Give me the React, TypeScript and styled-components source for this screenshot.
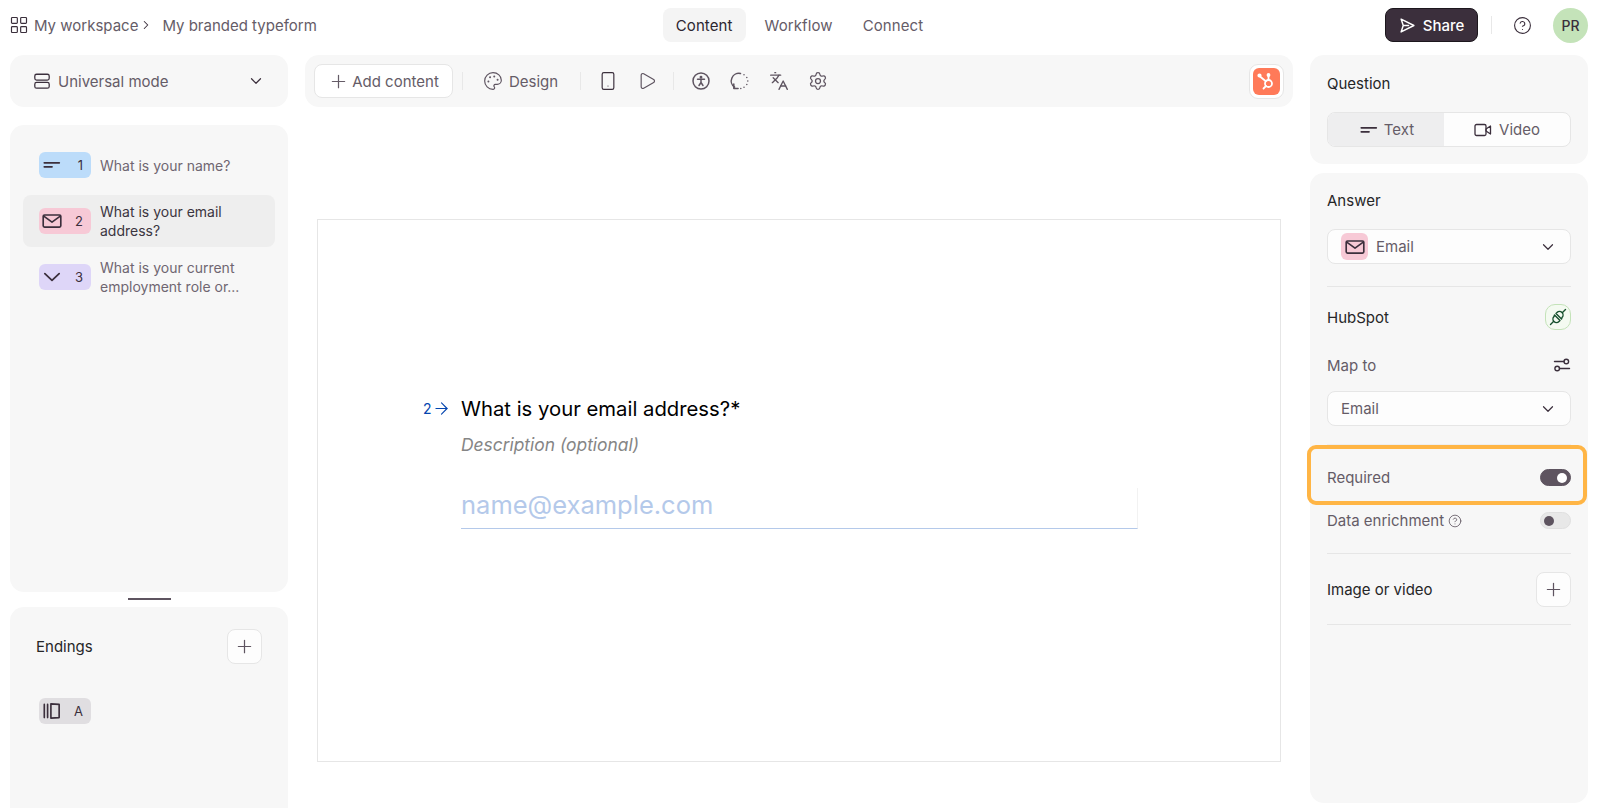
import { ReactNode } from "react";
import styled, { createGlobalStyle } from "styled-components";
import {
  ArrowRight,
  ChevronDown,
  ChevronRight,
  CircleHelp,
  Languages,
  LayoutGrid,
  Palette,
  Play,
  Plus,
  Settings,
  Smartphone,
} from "lucide-react";

const GlobalStyle = createGlobalStyle`
  html, body {
    margin: 0;
    padding: 0;
    height: 808px;
    overflow: hidden;
    background: #ffffff;
    font-family: Inter, "Liberation Sans", sans-serif;
    color: #5e5460;
  }
  * { box-sizing: border-box; }
`;

const Page = styled.div`
  width: 1600px;
  height: 808px;
  overflow: hidden;
`;

const TopBar = styled.header`
  height: 55px;
  display: grid;
  grid-template-columns: 1fr auto 1fr;
  align-items: center;
  padding: 0 12px 5px 9px;
`;

const Breadcrumb = styled.div`
  display: flex;
  align-items: center;
  font-size: 15px;
  color: #655c67;
`;

const CrumbLink = styled.span`
  margin: 0 1px 0 5px;
`;

const CrumbTitle = styled.span`
  margin-left: 9px;
`;

const Tabs = styled.nav`
  display: flex;
  margin-left: 6px;
`;

const Tab = styled.div<{ $active?: boolean }>`
  height: 34px;
  padding: 0 13px;
  margin-right: ${({ $active }) => ($active ? "6px" : "4px")};
  display: flex;
  align-items: center;
  border-radius: 8px;
  font-size: 15px;
  letter-spacing: 0.1px;
  color: ${({ $active }) => ($active ? "#2c2630" : "#655c67")};
  background: ${({ $active }) => ($active ? "#f4f4f4" : "transparent")};
`;

const TopActions = styled.div`
  display: flex;
  align-items: center;
  justify-content: flex-end;
`;

const ShareButton = styled.button`
  width: 93px;
  height: 34px;
  display: flex;
  align-items: center;
  justify-content: center;
  gap: 7px;
  border: 1px solid #1c171d;
  border-radius: 8px;
  background: #3b2f3c;
  color: #ffffff;
  font: 500 15px Inter, sans-serif;
`;

const VerticalRule = styled.div<{ $left?: number; $right?: number }>`
  width: 1px;
  height: 18px;
  margin: 0 ${({ $right }) => $right ?? 0}px 0 ${({ $left }) => $left ?? 0}px;
  background: #e8e8e8;
`;

const HelpSlot = styled.div`
  display: flex;
  margin: 0 21px;
`;

const Avatar = styled.div`
  width: 35px;
  height: 35px;
  border-radius: 50%;
  background: #c4e3b9;
  color: #3b2f3c;
  display: flex;
  align-items: center;
  justify-content: center;
  font-size: 14px;
  font-weight: 500;
`;

const Workspace = styled.div`
  display: grid;
  grid-template-columns: 278px 988px 278px;
  column-gap: 17px;
  padding-left: 10px;
`;

const Column = styled.div`
  display: flex;
  flex-direction: column;
`;

const Card = styled.section`
  background: #f7f7f7;
  border-radius: 14px;
`;

const ModeCard = styled(Card)`
  height: 52px;
  display: flex;
  align-items: center;
  padding: 0 23px 0 23px;
  font-size: 15px;
  color: #655c67;
  margin-bottom: 18px;
`;

const ModeLabel = styled.span`
  margin-left: 7px;
  flex: 1;
`;

const ListCard = styled(Card)`
  height: 467px;
  padding: 14px 13px;
`;

const QuestionItem = styled.div<{ $active?: boolean }>`
  display: flex;
  align-items: center;
  height: 52px;
  padding: 0 16px;
  border-radius: 8px;
  background: ${({ $active }) => ($active ? "#eeeeee" : "transparent")};
  margin-bottom: 4px;
`;

const TypeChip = styled.div<{ $color: string }>`
  flex: none;
  width: 52px;
  height: 26px;
  border-radius: 6px;
  background: ${({ $color }) => $color};
  display: flex;
  align-items: center;
  justify-content: space-between;
  padding: 0 8px 0 2px;
  font-size: 13px;
  color: #3b2f3c;
  margin-right: 9px;
`;

const ItemText = styled.div<{ $active?: boolean }>`
  font-size: 14px;
  line-height: 19px;
  color: ${({ $active }) => ($active ? "#3b3540" : "#6f6671")};
`;

const DragHandle = styled.div`
  width: 43px;
  height: 2px;
  margin: 6px auto 7px;
  background: #5e5460;
`;

const EndingsCard = styled(Card)`
  height: 260px;
  padding: 22px 26px 0 26px;
`;

const EndingsHead = styled.div`
  display: flex;
  align-items: center;
  justify-content: space-between;
  margin-bottom: 34px;
`;

const CardTitle = styled.div`
  font-size: 15px;
  color: #262627;
`;

const EndingChip = styled(TypeChip)`
  margin-left: 3px;
`;

const SquareButton = styled.button`
  width: 35px;
  height: 35px;
  padding: 0;
  border-radius: 8px;
  border: 1px solid #e6e6e6;
  background: #fdfdfd;
  display: flex;
  align-items: center;
  justify-content: center;
  color: #5e5460;
`;

const Toolbar = styled(Card)`
  height: 52px;
  display: flex;
  align-items: center;
  padding: 0 9px 0 9px;
`;

const AddButton = styled.button`
  width: 139px;
  height: 34px;
  display: flex;
  align-items: center;
  justify-content: center;
  gap: 3px;
  padding: 0;
  border-radius: 8px;
  border: 1px solid #e6e6e6;
  background: #ffffff;
  font: 15px Inter, sans-serif;
  color: #655c67;
`;

const ToolGroup = styled.div`
  display: flex;
  align-items: center;
  gap: 19px;
`;

const DesignLabel = styled.div`
  display: flex;
  align-items: center;
  gap: 6px;
  font-size: 15px;
  color: #655c67;
`;

const HubspotFrame = styled.div`
  margin-left: auto;
  width: 35px;
  height: 35px;
  border-radius: 9px;
  background: #ffffff;
  border: 1px solid #e6e6e6;
  display: flex;
  align-items: center;
  justify-content: center;
`;

const HubspotBadge = styled.div`
  width: 27px;
  height: 27px;
  border-radius: 6px;
  background: #ff7a59;
  display: flex;
  align-items: center;
  justify-content: center;
`;

const Canvas = styled.div`
  margin: 112px 12px 0;
  height: 543px;
  border: 1px solid #e6e6e6;
  padding: 174px 0 0 105px;
  background: #ffffff;
`;

const PromptRow = styled.div`
  display: flex;
  align-items: center;
  height: 28px;
`;

const PromptIndex = styled.div`
  width: 38px;
  display: flex;
  align-items: center;
  font-size: 14px;
  color: #0445af;
  gap: 0;
`;

const PromptTitle = styled.div`
  font-size: 20.3px;
  color: #000000;
`;

const Description = styled.div`
  margin: 11px 0 0 38px;
  font-size: 17.4px;
  line-height: 24px;
  font-style: italic;
  color: #858585;
`;

const AnswerField = styled.div`
  margin: 31px 0 0 38px;
  width: 677px;
  height: 41px;
  display: flex;
  align-items: center;
  padding-bottom: 8px;
  border-bottom: 1px solid #b4c9ea;
  border-right: 1px solid #f2f2f2;
  font-size: 25.5px;
  color: #b4c9ea;
`;

const QuestionCard = styled(Card)`
  height: 109px;
  padding: 19px 17px 0 17px;
  margin-bottom: 9px;
`;

const Segmented = styled.div`
  margin-top: 19px;
  height: 35px;
  display: grid;
  grid-template-columns: 116px 1fr;
  border: 1px solid #e6e6e6;
  border-radius: 8px;
  overflow: hidden;
  background: #fdfdfd;
`;

const Segment = styled.div<{ $active?: boolean }>`
  display: flex;
  align-items: center;
  justify-content: center;
  gap: ${({ $active }) => ($active ? "4px" : "7px")};
  font-size: 15px;
  color: #655c67;
  background: ${({ $active }) => ($active ? "#eeeeef" : "transparent")};
`;

const AnswerCard = styled(Card)`
  height: 630px;
  padding: 18px 17px 0 17px;
`;

const SelectBox = styled.div<{ $top?: number }>`
  margin-top: ${({ $top }) => $top ?? 0}px;
  height: 35px;
  display: flex;
  align-items: center;
  justify-content: space-between;
  padding: 0 13px 0 13px;
  border: 1px solid #e6e6e6;
  border-radius: 8px;
  background: #fdfdfd;
  font-size: 15px;
  color: #655c67;
`;

const SelectValue = styled.div`
  display: flex;
  align-items: center;
  gap: 8px;
`;

const MiniChip = styled.div`
  width: 27px;
  height: 27px;
  border-radius: 6px;
  background: #f7c9d6;
  display: flex;
  align-items: center;
  justify-content: center;
`;

const Rule = styled.div<{ $top: number; $faint?: boolean }>`
  margin-top: ${({ $top }) => $top}px;
  height: 1px;
  background: ${({ $faint }) => ($faint ? "#eeeeee" : "#e6e6e6")};
`;

const SettingRow = styled.div<{ $top: number; $height: number }>`
  position: relative;
  display: flex;
  align-items: center;
  justify-content: space-between;
  margin-top: ${({ $top }) => $top}px;
  height: ${({ $height }) => $height}px;
`;

const SettingLabel = styled.div`
  display: flex;
  align-items: center;
  gap: 4px;
  font-size: 15px;
  color: #655c67;
`;

const Highlight = styled.div`
  position: absolute;
  left: -20px;
  right: -16px;
  top: -23px;
  bottom: -19px;
  border: 4px solid #ffb545;
  border-radius: 9px;
`;

const Toggle = styled.div<{ $on?: boolean }>`
  width: 31px;
  height: 17px;
  border-radius: 9px;
  padding: 3px;
  display: flex;
  justify-content: ${({ $on }) => ($on ? "flex-end" : "flex-start")};
  background: ${({ $on }) => ($on ? "#5e5460" : "#e8e8e8")};
  border: 1px solid ${({ $on }) => ($on ? "#5e5460" : "#e0e0e0")};
`;

const ToggleKnob = styled.div<{ $on?: boolean }>`
  width: 10px;
  height: 10px;
  border-radius: 50%;
  background: ${({ $on }) => ($on ? "#ffffff" : "#5e5460")};
`;

const ConnectedBadge = styled.div`
  width: 26px;
  height: 26px;
  border-radius: 10px;
  border: 1px solid #c4e3b9;
  background: #f4faf1;
  display: flex;
  align-items: center;
  justify-content: center;
`;

const Icon = ({ size = 20, color = "#3b2f3c", width = 1.5, children }: { size?: number; color?: string; width?: number; children: ReactNode }) => (
  <svg width={size} height={size} viewBox="0 0 20 20" fill="none" stroke={color} strokeWidth={width} strokeLinecap="round" strokeLinejoin="round">
    {children}
  </svg>
);

const ShortTextIcon = () => (
  <Icon size={22} width={1.6}>
    <path d="M3 8h13.6M3 11.6h7" />
  </Icon>
);

const MailIcon = () => (
  <Icon size={22} width={1.5}>
    <rect x="2" y="4.5" width="16" height="11" rx="1.2" />
    <path d="M2.5 5.5l7.5 5.5 7.5-5.5" />
  </Icon>
);

const ChevronIcon = () => (
  <Icon size={22} width={1.6}>
    <path d="M3.5 7l6.5 6 6.5-6" />
  </Icon>
);

const EndingIcon = () => (
  <Icon size={22}>
    <path d="M3 4v12M6 4v12M9 3.5l7.5 .5v12l-7.5 .5z" />
  </Icon>
);

const ModeIcon = () => (
  <Icon size={18} width={1.4}>
    <rect x="2" y="2.5" width="16" height="6.5" rx="2" />
    <rect x="2" y="11.5" width="16" height="6.5" rx="2" />
  </Icon>
);

const AccessibilityIcon = () => (
  <Icon color="#5e5460">
    <circle cx="10" cy="10" r="8" />
    <circle cx="10" cy="6.2" r="0.7" />
    <path d="M6.5 8.3h7M10 8.3v3.2M10 11.5l-2 3M10 11.5l2 3" />
  </Icon>
);

const LoopIcon = () => (
  <Icon color="#5e5460">
    <path d="M4.6 16.2A7.6 7.6 0 0 1 10.5 2.5" />
    <path d="M3.8 13v4.4h4.3" />
    <path d="M14 3.7v0M16.8 6.6v0M17.8 10v0M16.8 13.4v0M14 16.2v0M10.8 17.4v0" />
  </Icon>
);

const ShareIcon = () => (
  <svg width="17" height="17" viewBox="0 0 16 16" fill="none" stroke="#ffffff" strokeWidth="1.4" strokeLinejoin="round" strokeLinecap="round">
    <path d="M2 2l12 6-12 6 2-6zM4 8h5" />
  </svg>
);

const VideoIcon = () => (
  <svg width="18" height="14" viewBox="0 0 18 14" fill="none" stroke="#3b2f3c" strokeWidth="1.3" strokeLinejoin="round">
    <rect x="1" y="1.5" width="11" height="11" rx="1.5" />
    <path d="M12 6l4.5-3v8L12 8z" />
  </svg>
);

const MapIcon = () => (
  <svg width="18" height="18" viewBox="0 0 18 18" fill="none" stroke="#3b2f3c" strokeWidth="1.4" strokeLinecap="round">
    <path d="M1.5 5.5h9.5M6.5 12.5h10" />
    <circle cx="13.3" cy="5.5" r="2.3" />
    <circle cx="4.2" cy="12.5" r="2.3" />
  </svg>
);

const PlugIcon = () => (
  <svg width="18" height="18" viewBox="0 0 18 18" fill="none" stroke="#16502d" strokeWidth="1.4" strokeLinecap="round" strokeLinejoin="round">
    <path d="M1.5 16.5l3-3M13.5 4.5l3-3" />
    <path d="M5.5 7l5.5 5.5-1 1a3.5 3.5 0 0 1-5-5z" />
    <path d="M12.5 11L7 5.5l1-1a3.5 3.5 0 0 1 5 5z" />
  </svg>
);

const HubspotIcon = () => (
  <svg width="21" height="21" viewBox="0 0 21 21" fill="none" stroke="#ffffff" strokeWidth="1.8" strokeLinecap="round">
    <circle cx="12.5" cy="12.5" r="3.5" />
    <path d="M12.5 9V4.5M9.8 10.2L4 5.5M10 15l-2.5 2.5" />
    <circle cx="3.5" cy="4.5" r="1.2" fill="#ffffff" />
    <circle cx="12.5" cy="4" r="1" fill="#ffffff" />
  </svg>
);

const App = () => {
  return (
    <Page>
      <GlobalStyle />
      <TopBar>
        <Breadcrumb>
          <LayoutGrid size={20} strokeWidth={1.4} color="#3b2f3c" />
          <CrumbLink>My workspace</CrumbLink>
          <ChevronRight size={14} strokeWidth={1.8} color="#3b2f3c" />
          <CrumbTitle>My branded typeform</CrumbTitle>
        </Breadcrumb>
        <Tabs>
          <Tab $active>Content</Tab>
          <Tab>Workflow</Tab>
          <Tab>Connect</Tab>
        </Tabs>
        <TopActions>
          <ShareButton>
            <ShareIcon />
            Share
          </ShareButton>
          <VerticalRule $left={13} />
          <HelpSlot>
            <CircleHelp size={19} strokeWidth={1.4} color="#3b2f3c" />
          </HelpSlot>
          <Avatar>PR</Avatar>
        </TopActions>
      </TopBar>

      <Workspace>
        <Column>
          <ModeCard>
            <ModeIcon />
            <ModeLabel>Universal mode</ModeLabel>
            <ChevronDown size={18} strokeWidth={1.6} color="#3b2f3c" />
          </ModeCard>
          <ListCard>
            <QuestionItem>
              <TypeChip $color="#bcdcfa">
                <ShortTextIcon />
                <span>1</span>
              </TypeChip>
              <ItemText>What is your name?</ItemText>
            </QuestionItem>
            <QuestionItem $active>
              <TypeChip $color="#f7c9d6">
                <MailIcon />
                <span>2</span>
              </TypeChip>
              <ItemText $active>What is your email address?</ItemText>
            </QuestionItem>
            <QuestionItem>
              <TypeChip $color="#ded6f8">
                <ChevronIcon />
                <span>3</span>
              </TypeChip>
              <ItemText>
                What is your current
                <br />
                employment role or...
              </ItemText>
            </QuestionItem>
          </ListCard>
          <DragHandle />
          <EndingsCard>
            <EndingsHead>
              <CardTitle>Endings</CardTitle>
              <SquareButton>
                <Plus size={21} strokeWidth={1.4} />
              </SquareButton>
            </EndingsHead>
            <EndingChip $color="#e0dee1">
              <EndingIcon />
              <span>A</span>
            </EndingChip>
          </EndingsCard>
        </Column>

        <Column>
          <Toolbar>
            <AddButton>
              <Plus size={21} strokeWidth={1.4} />
              Add content
            </AddButton>
            <VerticalRule $left={9} $right={20} />
            <DesignLabel>
              <Palette size={20} strokeWidth={1.4} color="#5e5460" />
              Design
            </DesignLabel>
            <VerticalRule $left={22} $right={17} />
            <ToolGroup>
              <Smartphone size={20} strokeWidth={1.4} color="#3b2f3c" />
              <Play size={20} strokeWidth={1.4} color="#5e5460" />
            </ToolGroup>
            <VerticalRule $left={16} $right={17} />
            <ToolGroup>
              <AccessibilityIcon />
              <LoopIcon />
              <Languages size={20} strokeWidth={1.6} color="#5e5460" />
              <Settings size={20} strokeWidth={1.5} color="#5e5460" />
            </ToolGroup>
            <HubspotFrame>
              <HubspotBadge>
                <HubspotIcon />
              </HubspotBadge>
            </HubspotFrame>
          </Toolbar>
          <Canvas>
            <PromptRow>
              <PromptIndex>
                2
                <ArrowRight size={19} strokeWidth={1.4} />
              </PromptIndex>
              <PromptTitle>What is your email address?*</PromptTitle>
            </PromptRow>
            <Description>Description (optional)</Description>
            <AnswerField>name@example.com</AnswerField>
          </Canvas>
        </Column>

        <Column>
          <QuestionCard>
            <CardTitle>Question</CardTitle>
            <Segmented>
              <Segment $active>
                <ShortTextIcon />
                Text
              </Segment>
              <Segment>
                <VideoIcon />
                Video
              </Segment>
            </Segmented>
          </QuestionCard>
          <AnswerCard>
            <CardTitle>Answer</CardTitle>
            <SelectBox $top={19}>
              <SelectValue>
                <MiniChip>
                  <MailIcon />
                </MiniChip>
                Email
              </SelectValue>
              <ChevronDown size={18} strokeWidth={1.6} color="#3b2f3c" />
            </SelectBox>
            <Rule $top={22} />
            <SettingRow $top={17} $height={26}>
              <CardTitle>HubSpot</CardTitle>
              <ConnectedBadge>
                <PlugIcon />
              </ConnectedBadge>
            </SettingRow>
            <SettingRow $top={22} $height={26}>
              <SettingLabel>Map to</SettingLabel>
              <MapIcon />
            </SettingRow>
            <SelectBox $top={13}>
              <SelectValue>Email</SelectValue>
              <ChevronDown size={18} strokeWidth={1.6} color="#3b2f3c" />
            </SelectBox>
            <Rule $top={18} $faint />
            <SettingRow $top={23} $height={18}>
              <SettingLabel>Required</SettingLabel>
              <Toggle $on>
                <ToggleKnob $on />
              </Toggle>
              <Highlight />
            </SettingRow>
            <SettingRow $top={26} $height={17}>
              <SettingLabel>
                Data enrichment
                <CircleHelp size={14} strokeWidth={1.4} color="#5e5460" />
              </SettingLabel>
              <Toggle>
                <ToggleKnob />
              </Toggle>
            </SettingRow>
            <Rule $top={24} />
            <SettingRow $top={18} $height={35}>
              <CardTitle>Image or video</CardTitle>
              <SquareButton>
                <Plus size={21} strokeWidth={1.4} />
              </SquareButton>
            </SettingRow>
            <Rule $top={17} />
          </AnswerCard>
        </Column>
      </Workspace>
    </Page>
  );
};

export default App;
